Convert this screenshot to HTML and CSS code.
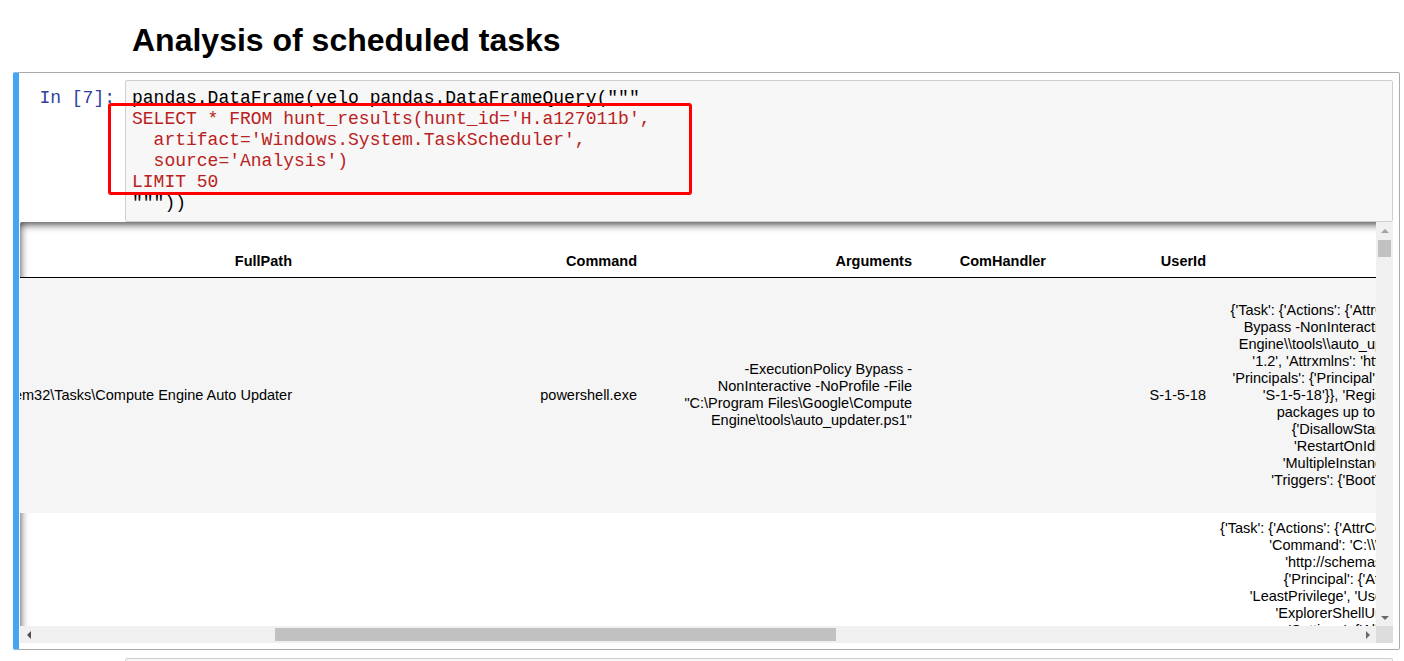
FILE: index.html
```html
<!DOCTYPE html>
<html lang="en">
<head>
<meta charset="utf-8">
<title>Analysis of scheduled tasks</title>
<link rel="stylesheet" href="styles.css">
</head>
<body>
<div class="nb">
  <div class="md-cell">
    <h2 class="title">Analysis of scheduled tasks</h2>
  </div>

  <div class="cell selected">
    <div class="input">
      <div class="prompt">In&nbsp;[7]:</div>
      <div class="input-area">
<pre class="code"><span class="v">pandas.DataFrame(velo_pandas.DataFrameQuery("""</span>
<span class="s">SELECT * FROM hunt_results(hunt_id='H.a127011b',</span>
<span class="s">  artifact='Windows.System.TaskScheduler',</span>
<span class="s">  source='Analysis')</span>
<span class="s">LIMIT 50</span>
<span class="v">"""))</span></pre>
        <div class="annot"></div>
      </div>
    </div>

    <div class="output">
      <div class="viewport">
        <table class="df">
          <colgroup>
            <col class="c-path">
            <col class="c-cmd">
            <col class="c-args">
            <col class="c-com">
            <col class="c-user">
            <col class="c-xml">
          </colgroup>
          <thead>
            <tr>
              <th>FullPath</th>
              <th>Command</th>
              <th>Arguments</th>
              <th>ComHandler</th>
              <th>UserId</th>
              <th>_XML</th>
            </tr>
          </thead>
          <tbody>
            <tr class="odd r1">
              <td class="nw">C:\Windows\System32\Tasks\Compute Engine Auto Updater</td>
              <td>powershell.exe</td>
              <td>-ExecutionPolicy Bypass -<br>NonInteractive -NoProfile -File<br>"C:\Program Files\Google\Compute<br>Engine\tools\auto_updater.ps1"</td>
              <td></td>
              <td>S-1-5-18</td>
              <td class="xml">
                <div class="ln">{'Task': {'Actions': {'Attr<span class="tail">Context': 'Author', 'Exec': {'Arguments': '-ExecutionPolicy</span></div>
                <div class="ln">Bypass -NonInteract<span class="tail">ive -NoProfile -File "C:\\Program Files\\Google\\Compute</span></div>
                <div class="ln">Engine\\tools\\auto_u<span class="tail">pdater.ps1"', 'Command': 'powershell.exe'}}, 'AttrVersion':</span></div>
                <div class="ln">'1.2', 'Attrxmlns': 'ht<span class="tail">tp://schemas.microsoft.com/windows/2004/02/mit/task',</span></div>
                <div class="ln">'Principals': {'Principal'<span class="tail">: {'AttrId': 'Author', 'UserId':</span></div>
                <div class="ln">'S-1-5-18'}}, 'Regi<span class="tail">strationInfo': {'Description': 'Keep Google Compute Engine</span></div>
                <div class="ln">packages up to<span class="tail">&nbsp;date'}, 'Settings':</span></div>
                <div class="ln">{'DisallowSta<span class="tail">rtIfOnBatteries': 'false', 'ExecutionTimeLimit': 'PT72H',</span></div>
                <div class="ln">'RestartOnId<span class="tail">le': 'false', 'StopOnIdleEnd': 'true'},</span></div>
                <div class="ln">'MultipleInstan<span class="tail">cesPolicy': 'IgnoreNew', 'Priority': '7'},</span></div>
                <div class="ln">'Triggers': {'Boot<span class="tail">Trigger': {'Enabled': 'true'}}}}</span></div>
              </td>
            </tr>
            <tr class="r2">
              <td class="nw">C:\Windows\System32\Tasks\Microsoft\Windows\Shell\FamilySafetyMonitor</td>
              <td>C:\Windows\System32\wpcmon.exe</td>
              <td></td>
              <td></td>
              <td></td>
              <td class="xml">
                <div class="ln">{'Task': {'Actions': {'AttrC<span class="tail">ontext': 'Author', 'Exec': {'Arguments':</span></div>
                <div class="ln">'Command': 'C:\\<span class="tail">Windows\\System32\\wpcmon.exe'}}, 'AttrVersion': '1.2', 'Attrxmlns':</span></div>
                <div class="ln">'http://schema<span class="tail">s.microsoft.com/windows/2004/02/mit/task', 'Principals':</span></div>
                <div class="ln">{'Principal': {'A<span class="tail">ttrId': 'Author', 'GroupId': 'S-1-5-32-545', 'RunLevel':</span></div>
                <div class="ln">'LeastPrivilege', 'Us<span class="tail">erId': None}}, 'RegistrationInfo': {'Description':</span></div>
                <div class="ln">'ExplorerShellU<span class="tail">nlock', 'URI': '\\Microsoft\\Windows\\Shell\\FamilySafetyMonitor'},</span></div>
                <div class="ln">'Settings': {'Al<span class="tail">lowStartOnDemand': 'true', 'DisallowStartIfOnBatteries':</span></div>
                <div class="ln">'false', 'Enabled': 'true',<span class="tail">&nbsp;'ExecutionTimeLimit': 'PT0S',</span></div>
                <div class="ln">'Hidden': 'true', 'IdleSettings':<span class="tail">&nbsp;{'StopOnIdleEnd': 'true'},</span></div>
                <div class="ln">'MultipleInstancesPolicy':<span class="tail">&nbsp;'IgnoreNew', 'Priority': '7'},</span></div>
                <div class="ln">'Triggers': {'LogonTrigger':<span class="tail">&nbsp;{'Enabled': 'true'}}}}</span></div>
                <div class="ln">{'Task': {'Actions':<span class="tail">&nbsp;{'Exec': {}}}}</span></div>
                <div class="ln">'AttrVersion': '1.4',<span class="tail">&nbsp;'Attrxmlns':</span></div>
                <div class="ln">'RunOnlyIfIdle': 'false',<span class="tail">&nbsp;'WakeToRun':</span></div>
                <div class="ln">'false'}, 'Principals':<span class="tail">&nbsp;{}</span></div>
                <div class="ln">'StartWhenAvailable':<span class="tail">&nbsp;'true'}}}</span></div>
              </td>
            </tr>
          </tbody>
        </table>
      </div>
      <div class="vscroll">
        <div class="sb-btn up"></div>
        <div class="v-track"><div class="v-thumb"></div></div>
        <div class="sb-btn down"></div>
      </div>
      <div class="hscroll">
        <div class="sb-btn left"></div>
        <div class="h-track"><div class="h-thumb"></div></div>
        <div class="sb-btn right"></div>
      </div>
      <div class="corner"></div>
    </div>
  </div>

  <div class="cell next">
    <div class="input">
      <div class="prompt"></div>
      <div class="input-area empty"></div>
    </div>
  </div>
</div>
</body>
</html>
```

FILE: styles.css
```css
html, body {
  margin: 0;
  padding: 0;
  background: #ffffff;
  height: 661px;
  overflow: hidden;
}

.nb {
  width: 1387px;
  padding-left: 13px;
}

.md-cell {
  padding: 21px 0 13px 119px;
}

.title {
  margin: 0;
  font: bold 32px/38px "Liberation Sans", Arial, sans-serif;
  color: #000000;
}

.cell {
  border: 1px solid #ababab;
  border-left: 6px solid #42a5f5;
  border-radius: 2px;
  padding: 7px 6px 6px 0;
}

.cell.next {
  border-color: transparent;
  padding-bottom: 0;
}

.input {
  display: flex;
}

.prompt {
  width: 106px;
  flex: none;
  box-sizing: border-box;
  padding: 8px 10px 0 0;
  text-align: right;
  font: 18px/21px "Liberation Mono", "Courier New", monospace;
  color: #303f9f;
}

.input-area {
  position: relative;
  flex: 1;
  border: 1px solid #cfcfcf;
  border-radius: 2px;
  background: #f7f7f7;
  padding: 7px 6px;
}

.input-area.empty {
  height: 40px;
}

.code {
  margin: 0;
  font: 18px/21px "Liberation Mono", "Courier New", monospace;
  color: #000000;
}

.code .s {
  color: #ba2121;
}

.annot {
  position: absolute;
  left: -18px;
  top: 22px;
  width: 584px;
  height: 92px;
  box-sizing: border-box;
  border: 3px solid #ff0000;
  border-radius: 3px;
}

.output {
  margin-left: 1px;
  height: 421px;
  display: grid;
  grid-template-columns: 1fr 17px;
  grid-template-rows: 1fr 17px;
  box-shadow: inset 0 2px 8px rgba(0, 0, 0, 0.8);
  border-radius: 2px;
}

.viewport {
  overflow: hidden;
  padding-top: 24px;
  min-width: 0;
}

.df {
  border-collapse: collapse;
  table-layout: fixed;
  width: 1753px;
  margin-left: -141px;
  font: 14.5px/17px "Liberation Sans", Arial, sans-serif;
  color: #000000;
}

.c-path { width: 420px; }
.c-cmd { width: 345px; }
.c-args { width: 275px; }
.c-com { width: 134px; }
.c-user { width: 160px; }
.c-xml { width: 419px; }

.df thead {
  border-bottom: 1px solid #000000;
}

.df th,
.df td {
  padding: 7px;
  text-align: right;
  vertical-align: middle;
}

.df th {
  font-weight: bold;
}

.df tr.odd {
  background: #f5f5f5;
}

.df tr.r1 {
  height: 235px;
}

.df td.nw {
  white-space: nowrap;
}

.df td.xml {
  white-space: nowrap;
}

.ln {
  text-align: right;
}

.tail {
  display: inline-block;
  width: 250px;
  overflow: hidden;
  text-align: left;
  vertical-align: top;
  white-space: nowrap;
}

.vscroll {
  background: #f0f0f0;
  display: flex;
  flex-direction: column;
}

.v-track {
  flex: 1;
}

.v-thumb {
  margin: 1px 2px 0;
  height: 17px;
  background: #c1c1c1;
}

.hscroll {
  background: #f0f0f0;
  display: flex;
}

.h-track {
  flex: 1;
  display: flex;
  align-items: center;
}

.h-thumb {
  margin-left: 238px;
  width: 561px;
  height: 13px;
  background: #c1c1c1;
}

.corner {
  background: #dcdcdc;
}

.sb-btn {
  width: 17px;
  height: 17px;
  flex: none;
  display: flex;
  align-items: center;
  justify-content: center;
}

.sb-btn::before {
  content: "";
  width: 0;
  height: 0;
}

.sb-btn.up::before {
  border-left: 4px solid transparent;
  border-right: 4px solid transparent;
  border-bottom: 4px solid #a3a3a3;
}

.sb-btn.down::before {
  border-left: 4px solid transparent;
  border-right: 4px solid transparent;
  border-top: 4px solid #6a6a6a;
}

.sb-btn.left::before {
  border-top: 4px solid transparent;
  border-bottom: 4px solid transparent;
  border-right: 4px solid #505050;
}

.sb-btn.right::before {
  border-top: 4px solid transparent;
  border-bottom: 4px solid transparent;
  border-left: 4px solid #6a6a6a;
}
```
